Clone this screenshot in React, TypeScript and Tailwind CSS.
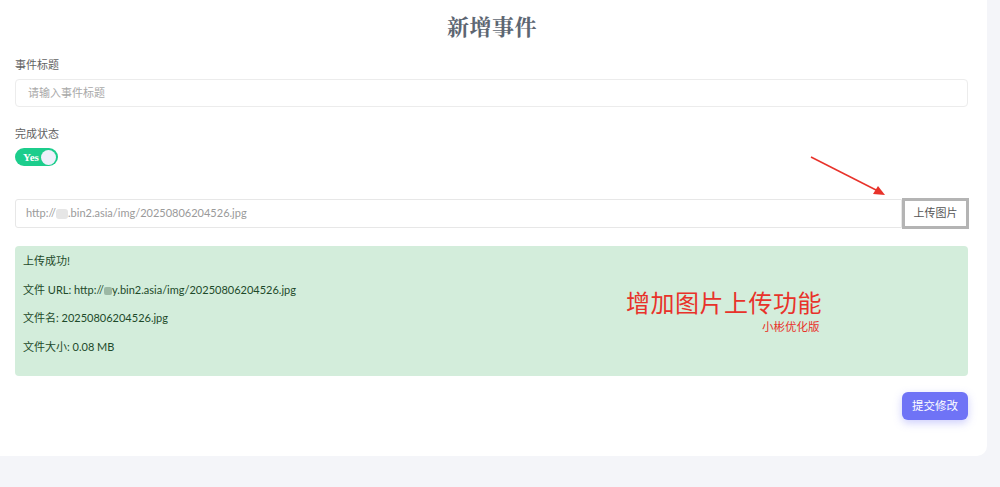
import React from "react";

const font = { fontFamily: 'Lato, "Noto Sans CJK SC", sans-serif' };

export default function App() {
  return (
    <div className="relative w-[1000px] h-[487px] bg-[#f4f5f9] overflow-hidden" style={font}>
      <div className="w-[987px] h-[456px] bg-white rounded-br-[10px] px-[15px] pt-[12px]">
        <h1
          className="text-center text-[22px] leading-[28px] font-bold text-[#5d6672] tracking-[0.5px] pr-[3px]"
          style={{ fontFamily: '"Noto Serif CJK SC", "Noto Sans CJK SC", serif' }}
        >
          新增事件
        </h1>

        <div className="mt-[18px] text-[11px] leading-[14px] text-[#626262]">事件标题</div>
        <div className="mt-[7px] w-[953px] h-[28px] border border-[#ececec] rounded-[4px] flex items-center pl-[12px] text-[11px] text-[#a9a9a9]">
          请输入事件标题
        </div>

        <div className="mt-[20px] text-[11px] leading-[14px] text-[#626262]">完成状态</div>
        <div className="mt-[7px] w-[43px] h-[18px] rounded-full bg-[#1ccd8c] flex items-center justify-between pl-[8px] pr-[2px]">
          <span
            className="text-white text-[11px] font-bold leading-none"
            style={{ fontFamily: '"Liberation Serif", serif' }}
          >
            Yes
          </span>
          <span className="w-[15px] h-[15px] rounded-full bg-[#eef0fb]" />
        </div>

        <div className="mt-[32px] flex items-center w-[954px]">
          <div className="flex-1 h-[29px] border border-[#e7e7e7] rounded-l-[3px] flex items-center pl-[10px] text-[11px] text-[#9a9a9a]">
            http://<span className="inline-block w-[12px] h-[10px] bg-[#e6e6e6] rounded-[3px]" />.bin2.asia/img/20250806204526.jpg
          </div>
          <button className="w-[67px] h-[31px] border-[3px] border-[#b4b4b4] bg-white text-[11px] text-[#555] flex items-center justify-center">
            上传图片
          </button>
        </div>

        <div className="relative mt-[17px] w-[953px] h-[130px] bg-[#d3eddb] rounded-[4px] pl-[8px] pt-[7px] flex flex-col gap-[12.5px] text-[11px] leading-[16px] text-[#1d4a2a]">
          <p>上传成功!</p>
          <p>
            文件 URL: http://
            <span className="inline-block w-[8px] h-[8px] bg-[#9cb8a4] rounded-[2px] align-middle" />
            y.bin2.asia/img/20250806204526.jpg
          </p>
          <p>文件名: 20250806204526.jpg</p>
          <p>文件大小: 0.08 MB</p>
          <div className="absolute left-[611px] top-[42px] text-[#e8322a] text-[24px] leading-[30px] tracking-[0.5px]">
            增加图片上传功能
          </div>
          <div className="absolute left-[747px] top-[74px] text-[#e8322a] text-[11.5px] leading-[14px]">
            小彬优化版
          </div>
        </div>

        <div className="mt-[16px] w-[953px] flex justify-end">
          <button className="w-[66px] h-[28px] rounded-[6px] bg-[#6f73f6] text-white text-[11.5px] shadow-[0_3px_8px_rgba(111,115,246,0.35)]">
            提交修改
          </button>
        </div>
      </div>

      <svg className="absolute left-0 top-0" width="1000" height="487" viewBox="0 0 1000 487">
        <line x1="811" y1="157" x2="878" y2="191" stroke="#e8322a" strokeWidth="1.5" />
        <polygon points="885,195 873,194 878,186" fill="#e8322a" />
      </svg>
    </div>
  );
}
